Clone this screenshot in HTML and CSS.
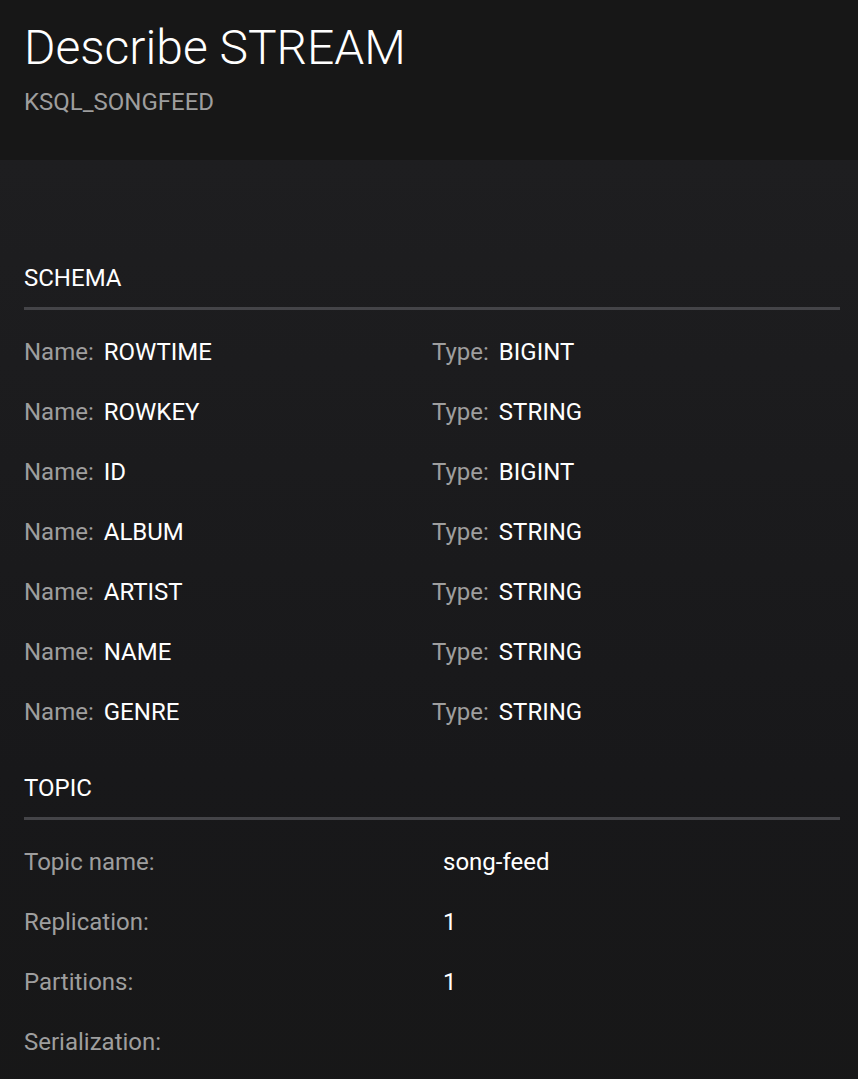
FILE: index.html
```html
<!DOCTYPE html>
<html>
<head>
<meta charset="utf-8">
<link rel="stylesheet" href="styles.css">
</head>
<body>
<header class="header">
  <h1 class="title">Describe STREAM</h1>
  <div class="subtitle">KSQL_SONGFEED</div>
</header>
<main class="content">
  <section class="section">
    <h2 class="section-title">SCHEMA</h2>
    <div class="schema">
      <div class="field"><span class="label">Name:</span><span class="value">ROWTIME</span></div>
      <div class="field"><span class="label">Type:</span><span class="value">BIGINT</span></div>
      <div class="field"><span class="label">Name:</span><span class="value">ROWKEY</span></div>
      <div class="field"><span class="label">Type:</span><span class="value">STRING</span></div>
      <div class="field"><span class="label">Name:</span><span class="value">ID</span></div>
      <div class="field"><span class="label">Type:</span><span class="value">BIGINT</span></div>
      <div class="field"><span class="label">Name:</span><span class="value">ALBUM</span></div>
      <div class="field"><span class="label">Type:</span><span class="value">STRING</span></div>
      <div class="field"><span class="label">Name:</span><span class="value">ARTIST</span></div>
      <div class="field"><span class="label">Type:</span><span class="value">STRING</span></div>
      <div class="field"><span class="label">Name:</span><span class="value">NAME</span></div>
      <div class="field"><span class="label">Type:</span><span class="value">STRING</span></div>
      <div class="field"><span class="label">Name:</span><span class="value">GENRE</span></div>
      <div class="field"><span class="label">Type:</span><span class="value">STRING</span></div>
    </div>
  </section>
  <section class="section">
    <h2 class="section-title">TOPIC</h2>
    <div class="topic">
      <span class="label">Topic name:</span><span class="tvalue">song-feed</span>
      <span class="label">Replication:</span><span class="tvalue">1</span>
      <span class="label">Partitions:</span><span class="tvalue">1</span>
      <span class="label">Serialization:</span><span class="tvalue"></span>
    </div>
  </section>
</main>
</body>
</html>
```
FILE: styles.css
```css
html, body {
  margin: 0;
  padding: 0;
  background: #181818;
  font-family: Roboto, "Noto Sans", sans-serif;
  color: #ffffff;
}
body {
  min-height: 1079px;
}
.header {
  background: #171717;
  height: 160px;
  box-sizing: border-box;
  padding: 22px 24px 0;
}
.title {
  margin: 0;
  font-weight: 300;
  font-size: 48px;
  line-height: 52px;
  color: #ffffff;
}
.subtitle {
  margin-top: 14px;
  font-size: 24px;
  line-height: 28px;
  color: #9e9e9e;
}
.content {
  background: linear-gradient(#1e1e20, #18181a 60%, #171717);
  min-height: 919px;
  padding: 100px 18px 0 24px;
}
.section-title {
  margin: 0;
  font-weight: 400;
  font-size: 24px;
  line-height: 36px;
  padding-bottom: 11px;
  border-bottom: 3px solid #444448;
}
.schema {
  display: grid;
  grid-template-columns: 1fr 1fr;
  padding-top: 12px;
  padding-bottom: 28px;
}
.field, .topic > span {
  height: 60px;
  display: flex;
  align-items: center;
  font-size: 24px;
}
.label {
  color: #9e9e9e;
}
.value {
  margin-left: 10px;
  color: #ffffff;
}
.topic {
  display: grid;
  grid-template-columns: 419px 1fr;
  padding-top: 12px;
}
.tvalue {
  color: #ffffff;
}
```
